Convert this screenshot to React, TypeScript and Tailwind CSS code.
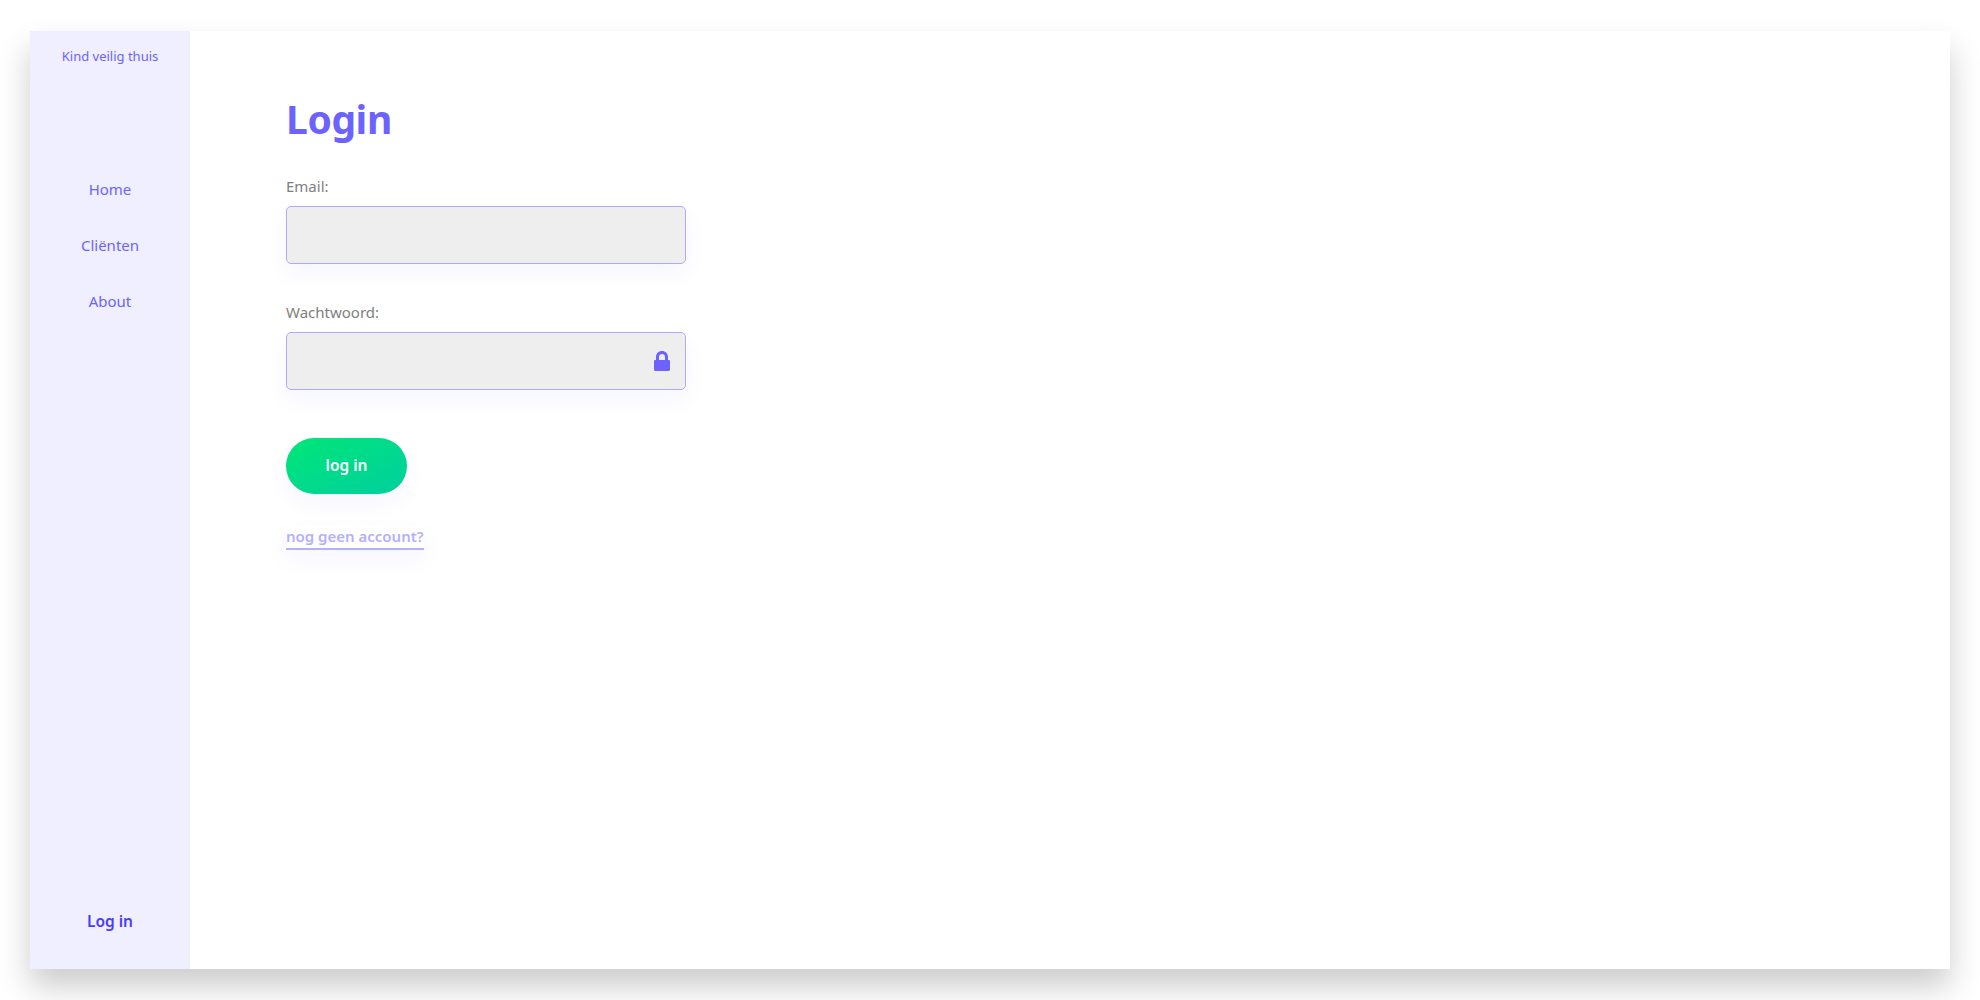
export default function App() {
  return (
    <div className="h-[1000px] bg-white pt-[31px] px-[30px] font-['Noto_Sans','Open_Sans',sans-serif] overflow-hidden">
      <div className="flex h-[938px] w-[1920px] bg-white shadow-[0_18px_30px_rgba(0,0,0,0.2)]">
        <aside className="flex w-[160px] shrink-0 flex-col items-center bg-[#f0efff]">
          <div className="mt-[15px] h-[20px] text-[13px] leading-[20px] text-[#6c63ff]">Kind veilig thuis</div>
          <nav className="mt-[112px] flex flex-col items-center gap-[34px] text-[15px] leading-[22px] text-[#6c63ff]">
            <a>Home</a>
            <a>Cliënten</a>
            <a>About</a>
          </nav>
          <a className="mt-auto mb-[37px] text-[15.5px] font-semibold leading-[22px] text-[#4a3aff]">Log in</a>
        </aside>
        <main className="flex flex-1 flex-col items-start pl-[96px] pt-[58px]">
          <h1 className="h-[60px] text-[39px] font-bold leading-[60px] tracking-[-0.4px] text-[#6c63ff]">Login</h1>
          <label className="mt-[26px] h-[22px] text-[15px] leading-[22px] text-[#808080]">Email:</label>
          <div className="mt-[9px] h-[58px] w-[400px] rounded-[5px] border border-[#b0a9ff] bg-[#eeeeee] shadow-[0_10px_20px_rgba(108,99,255,0.06)]" />
          <label className="mt-[37px] h-[22px] text-[15px] leading-[22px] text-[#808080]">Wachtwoord:</label>
          <div className="mt-[9px] flex h-[58px] w-[400px] items-center justify-end rounded-[5px] border border-[#b0a9ff] bg-[#eeeeee] pr-[15px] shadow-[0_10px_20px_rgba(108,99,255,0.06)]">
            <svg viewBox="0 0 16 20" className="h-[20px] w-[16px] fill-[#6c63ff]">
              <path d="M8 0C4.5 0 2 2.6 2 6v3H1a1 1 0 0 0-1 1v8.5A1.5 1.5 0 0 0 1.5 20h13a1.5 1.5 0 0 0 1.5-1.5V10a1 1 0 0 0-1-1h-1V6c0-3.4-2.5-6-6-6zM5 6c0-1.8 1.3-3 3-3s3 1.2 3 3v3H5V6z" />
            </svg>
          </div>
          <button className="mt-[48px] h-[56px] w-[121px] rounded-[28px] bg-gradient-to-br from-[#00e676] to-[#00cf9d] text-[15.5px] font-semibold text-white shadow-[0_10px_20px_rgba(108,99,255,0.06)]">log in</button>
          <a className="mt-[31px] border-b-2 border-[#b5afff] pb-[1px] text-[15px] font-semibold leading-[22px] text-[#b5afff] shadow-[0_10px_20px_rgba(108,99,255,0.06)]">nog geen account?</a>
        </main>
      </div>
    </div>
  );
}
